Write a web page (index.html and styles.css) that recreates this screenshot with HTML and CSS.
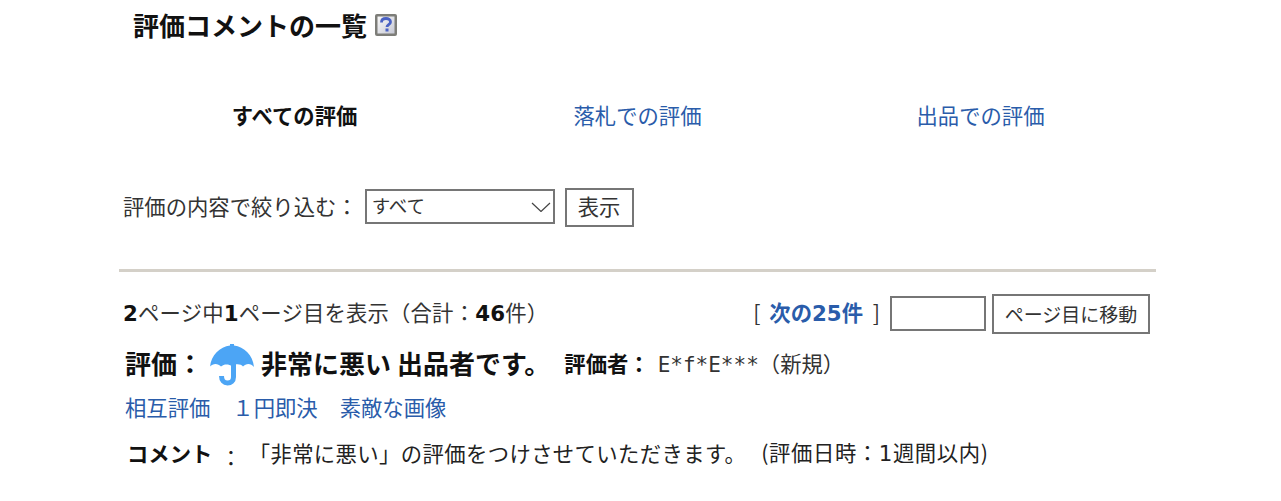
FILE: index.html
```html
<!DOCTYPE html>
<html lang="ja">
<head>
<meta charset="utf-8">
<title>評価コメントの一覧</title>
<link rel="stylesheet" href="styles.css">
</head>
<body>
<main class="page">
  <h1 class="title">評価コメントの一覧
    <svg class="help" viewBox="0 0 22 22" width="22" height="22" aria-hidden="true">
      <defs>
        <linearGradient id="helpbg" x1="0" y1="0" x2="1" y2="1"><stop offset="0" stop-color="#fafafa"/><stop offset="1" stop-color="#c6c8d4"/></linearGradient>
      </defs>
      <rect x="0" y="0" width="22" height="22" rx="2" fill="#7d7d78"/>
      <rect x="2.500" y="2.500" width="17" height="17" fill="url(#helpbg)"/>
      <path d="M6.500 8.500c0-2.800 2-4 4.500-4s4.500 1.400 4.500 3.400c0 2.800-3.500 2.600-3.500 5" fill="none" stroke="#4a62c4" stroke-width="2.800"/>
      <rect x="10.500" y="14.500" width="3" height="3" fill="#4a62c4"/>
    </svg>
  </h1>
  <nav class="tabs">
    <b class="tab current">すべての評価</b>
    <a class="tab" href="#">落札での評価</a>
    <a class="tab" href="#">出品での評価</a>
  </nav>
  <form class="filter">
    <span class="f-label">評価の内容で絞り込む：</span>
    <span class="select">すべて
      <svg class="chev" viewBox="0 0 20 10" width="20" height="10" aria-hidden="true"><path d="M1 1l9 8.500L19 1" fill="none" stroke="#444" stroke-width="1.200"/></svg>
    </span>
    <button class="btn show" type="button">表示</button>
  </form>
  <hr class="rule">
  <div class="pager">
    <div class="count"><b class="lat">2</b>ページ中<b class="lat">1</b>ページ目を表示（合計：<b class="lat">46</b>件）</div>
    <div class="nav">
      <span class="next">[ <a class="next-link" href="#"><b class="link-b">次の<span class="lat">25</span>件</b></a> ]</span>
      <span class="pageinput"></span>
      <button class="btn move" type="button">ページ目に移動</button>
    </div>
  </div>
  <div class="rating">
    <b class="r-label">評価：</b>
    <svg class="umbrella" viewBox="0 0 44 42" width="44" height="42" aria-hidden="true">
      <path d="M0 23C1 11 10 3 20 1.500V0h4v1.500C34 3 43 11 44 23c-3-4-8-4-11-.500-2-3-8-3-11-.500-3-2-8-2.500-11 .500-3-3.500-8-3.500-11 0z" fill="#4ca5f5"/>
      <path d="M23.500 20V33c0 4-2.500 6-6 6s-6-2.500-6-7" fill="none" stroke="#4ca5f5" stroke-width="5"/>
    </svg>
    <b class="r-text">非常に悪い 出品者です。</b>
    <b class="r-by">評価者：</b>
    <span class="r-name"><span class="mono">E*f*E***</span>（新規）</span>
  </div>
  <div class="tags">
    <a href="#">相互評価</a>
    <a href="#">１円即決</a>
    <a href="#">素敵な画像</a>
  </div>
  <div class="comment">
    <b class="c-label">コメント</b>
    <span class="c-sep">：</span>
    <span class="c-text">「非常に悪い」の評価をつけさせていただきます。</span>
    <span class="c-date">(評価日時：<span class="lat">1</span>週間以内)</span>
  </div>
</main>
</body>
</html>
```
FILE: styles.css
```css
* { box-sizing: border-box; }
html, body { margin: 0; height: 501px; overflow: hidden; background: #fff; }
body {
  font-family: "Noto Sans CJK JP", "DejaVu Sans", sans-serif;
  font-size: 21.33px;
  color: #333;
}
a { color: #2a5caa; text-decoration: none; }
b { color: #111; }
.lat { font-family: "DejaVu Sans", sans-serif; }
.mono { font-family: "DejaVu Sans Mono", monospace; font-size: 21px; }
.page { width: 1037px; margin-left: 119px; display: flex; flex-direction: column; }
.title {
  margin: 7px 0 0 14px;
  height: 36px;
  font-size: 26px;
  line-height: 36px;
  color: #111;
  display: flex;
  align-items: center;
  gap: 7px;
}
.help { width: 22px; height: 22px; margin-left: 1px; }
.tabs {
  margin-top: 57px;
  display: grid;
  grid-template-columns: repeat(3, 343px);
  padding-left: 4px;
  line-height: 30px;
}
.tab { text-align: center; }
.filter {
  margin-top: 58px;
  padding-left: 4px;
  display: flex;
  align-items: center;
  height: 38px;
}
.f-label { padding-bottom: 4px; }
.select {
  width: 190px;
  height: 35px;
  margin: -1px 0 0 7px;
  border: 2px solid #767676;
  padding: 0 2px 4px 5px;
  display: flex;
  justify-content: space-between;
  align-items: center;
  font-size: 18.500px;
  line-height: 26px;
}
.chev { margin-top: 4px; }
.btn {
  font: inherit;
  color: #333;
  background: #fff;
  border: 2px solid #767676;
  padding: 0;
}
.show { width: 69px; height: 39px; margin-left: 10px; padding-bottom: 5px; }
.rule { margin: 43px 0 0; height: 3px; border: 0; background: #d4d0c8; }
.pager {
  margin-top: 22px;
  display: flex;
  justify-content: space-between;
  align-items: center;
  height: 40px;
  padding: 0 6px 0 4px;
}
.count { padding-bottom: 5px; letter-spacing: .2px; }
.nav { display: flex; align-items: center; }
.next { margin-right: 10px; padding-bottom: 5px; }
.next-link { margin: 0 5px 0 4px; }
.link-b { color: #2a5caa; }
.pageinput { width: 96px; height: 35px; margin-top: -1px; border: 2px solid #767676; margin-right: 6px; }
.move { width: 158px; height: 40px; font-size: 19px; padding-bottom: 2px; }
.rating {
  margin-top: 6px;
  height: 44px;
  padding-left: 6px;
  display: flex;
  align-items: center;
}
.r-label { font-size: 26px; }
.umbrella { margin: 6px 7px 0; }
.r-text { font-size: 26px; }
.r-by { margin-left: 14px; }
.r-name { margin-left: 8px; }
.tags { margin-top: 8px; padding-left: 6px; display: flex; gap: 22px; line-height: 30px; }
.comment { margin-top: 12px; padding-left: 8px; display: flex; align-items: center; line-height: 30px; color: #222; }
.c-sep { margin-left: 8px; margin-top: 8px; margin-right: 7px; }
.c-text { letter-spacing: .4px; }
.c-date { margin-left: 15px; letter-spacing: .6px; }
```
